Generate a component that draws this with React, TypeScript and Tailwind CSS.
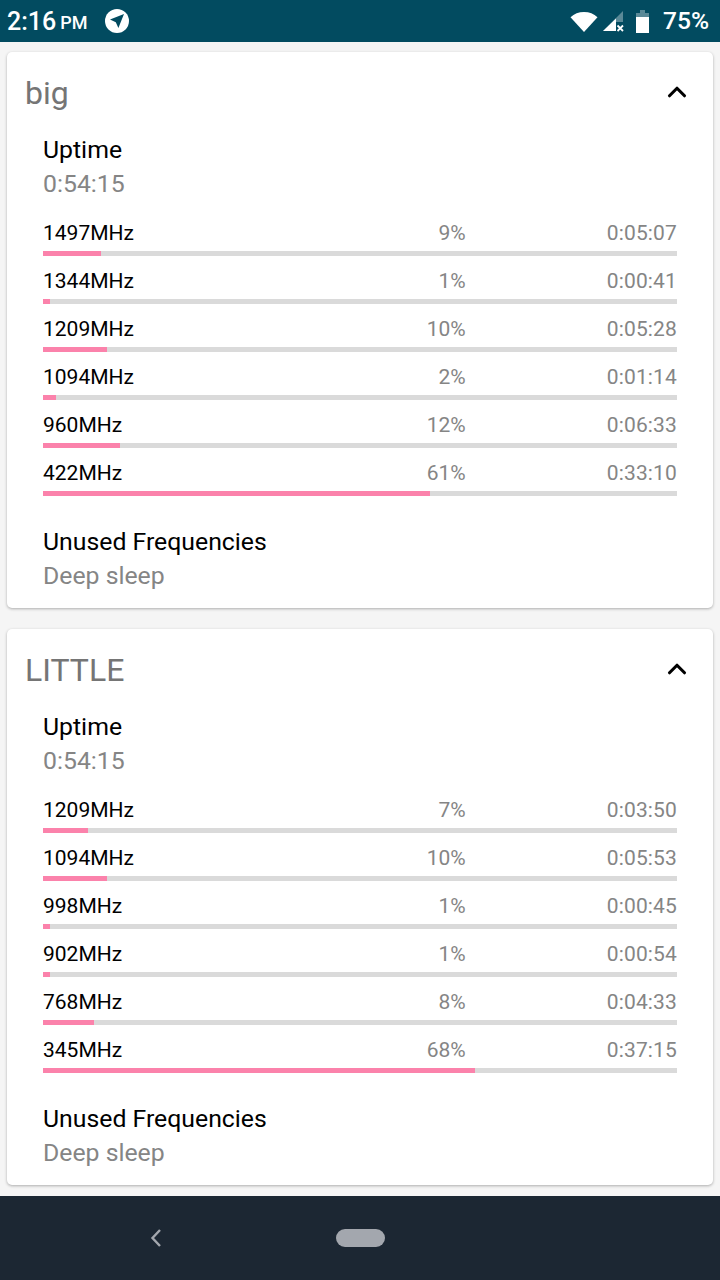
import { ChevronUp } from "lucide-react";

interface Row {
  freq: string;
  pct: number;
  time: string;
}

const bigRows: Row[] = [
  { freq: "1497MHz", pct: 9, time: "0:05:07" },
  { freq: "1344MHz", pct: 1, time: "0:00:41" },
  { freq: "1209MHz", pct: 10, time: "0:05:28" },
  { freq: "1094MHz", pct: 2, time: "0:01:14" },
  { freq: "960MHz", pct: 12, time: "0:06:33" },
  { freq: "422MHz", pct: 61, time: "0:33:10" },
];

const littleRows: Row[] = [
  { freq: "1209MHz", pct: 7, time: "0:03:50" },
  { freq: "1094MHz", pct: 10, time: "0:05:53" },
  { freq: "998MHz", pct: 1, time: "0:00:45" },
  { freq: "902MHz", pct: 1, time: "0:00:54" },
  { freq: "768MHz", pct: 8, time: "0:04:33" },
  { freq: "345MHz", pct: 68, time: "0:37:15" },
];

function StatusBar() {
  return (
    <div className="h-[42px] shrink-0 bg-[#024b60] flex items-center justify-between pl-[7px] pr-[11px] text-white">
      <div className="flex items-center">
        <span className="text-[25px] leading-none font-medium">2:16</span>
        <span className="text-[18px] leading-none font-medium ml-[4px] mt-[4px]">PM</span>
        {/* location circle */}
        <svg className="ml-[18px]" width="24" height="24" viewBox="0 0 24 24">
          <circle cx="12" cy="12" r="12" fill="#fff" />
          <path d="M19 5 L5 10.6 L10.8 13.2 L13.4 19 Z" fill="#024b60" />
        </svg>
      </div>
      <div className="flex items-center">
        <svg width="28" height="21" viewBox="0 0 28 21">
          <path d="M14 21 L0.5 6.2 Q6 1 14 1 Q22 1 27.5 6.2 Z" fill="#fff" />
        </svg>
        <svg className="ml-[5px]" width="21" height="21" viewBox="0 0 21 21">
          <path d="M20 0 L20 11 L13 11 L13 20 L0 20 Z" fill="#fff" fillOpacity="0.35" />
          <path d="M13 7.5 L13 20 L0 20 Z" fill="#fff" />
          <path d="M14.5 14.5 L20 20 M20 14.5 L14.5 20" stroke="#fff" strokeWidth="1.8" />
        </svg>
        <svg className="ml-[12px]" width="13" height="23" viewBox="0 0 13 23">
          <path d="M4 0 H9 V3 H13 V8 H0 V3 H4 Z" fill="#fff" fillOpacity="0.35" />
          <rect x="0" y="7" width="13" height="16" fill="#fff" />
        </svg>
        <span className="ml-[14px] text-[24.6px] leading-none font-medium">75%</span>
      </div>
    </div>
  );
}

function Card({ title, rows }: { title: string; rows: Row[] }) {
  return (
    <div className="bg-white rounded-[5px] shadow-[0_1px_3px_rgba(0,0,0,0.3)] h-[556px] px-[36px]">
      <div className="flex items-center justify-between -ml-[18px] h-[82px]">
        <span className="text-[32px] leading-none text-[#757575]">{title}</span>
        <ChevronUp size={30} strokeWidth={2.5} className="text-black -mr-[15px] -mt-[3px]" />
      </div>
      <div className="text-[24.8px] leading-[32px] text-black">Uptime</div>
      <div className="text-[24.8px] leading-[36px] text-[#858585]">0:54:15</div>
      <div className="mt-[15px] flex flex-col">
        {rows.map((r) => (
          <div key={r.freq} className="h-[48px]">
            <div className="grid grid-cols-3 h-[34px] pb-[2px] items-center text-[21px] leading-none">
              <span className="text-black">{r.freq}</span>
              <span className="text-right text-[#858585]">{r.pct}%</span>
              <span className="text-right text-[#858585] tracking-[0.15px]">{r.time}</span>
            </div>
            <div className="h-[5px] bg-[#dadada]">
              <div className="h-full bg-[#fb82ab]" style={{ width: `calc(${r.pct}% + 0.5px)` }} />
            </div>
          </div>
        ))}
      </div>
      <div className="mt-[21px] text-[24.8px] leading-[32px] text-black">Unused Frequencies</div>
      <div className="text-[24.8px] leading-[36px] text-[#858585]">Deep sleep</div>
    </div>
  );
}

export default function App() {
  return (
    <div className="w-[720px] h-[1280px] flex flex-col bg-[#f5f5f5] font-['Roboto',sans-serif] overflow-hidden">
      <StatusBar />
      <div className="flex-1 flex flex-col gap-[21px] px-[7px] pt-[10px]">
        <Card title="big" rows={bigRows} />
        <Card title="LITTLE" rows={littleRows} />
      </div>
      <div className="h-[84px] shrink-0 bg-[#1c2733] flex items-center pl-[149px]">
        <svg width="14" height="20" viewBox="0 0 14 20" fill="none">
          <path d="M11 2 L3.5 10 L11 18" stroke="#a3a7ae" strokeWidth="2.4" />
        </svg>
        <div className="ml-[173px] w-[49px] h-[18px] rounded-full bg-[#a3a7ae]" />
      </div>
    </div>
  );
}
